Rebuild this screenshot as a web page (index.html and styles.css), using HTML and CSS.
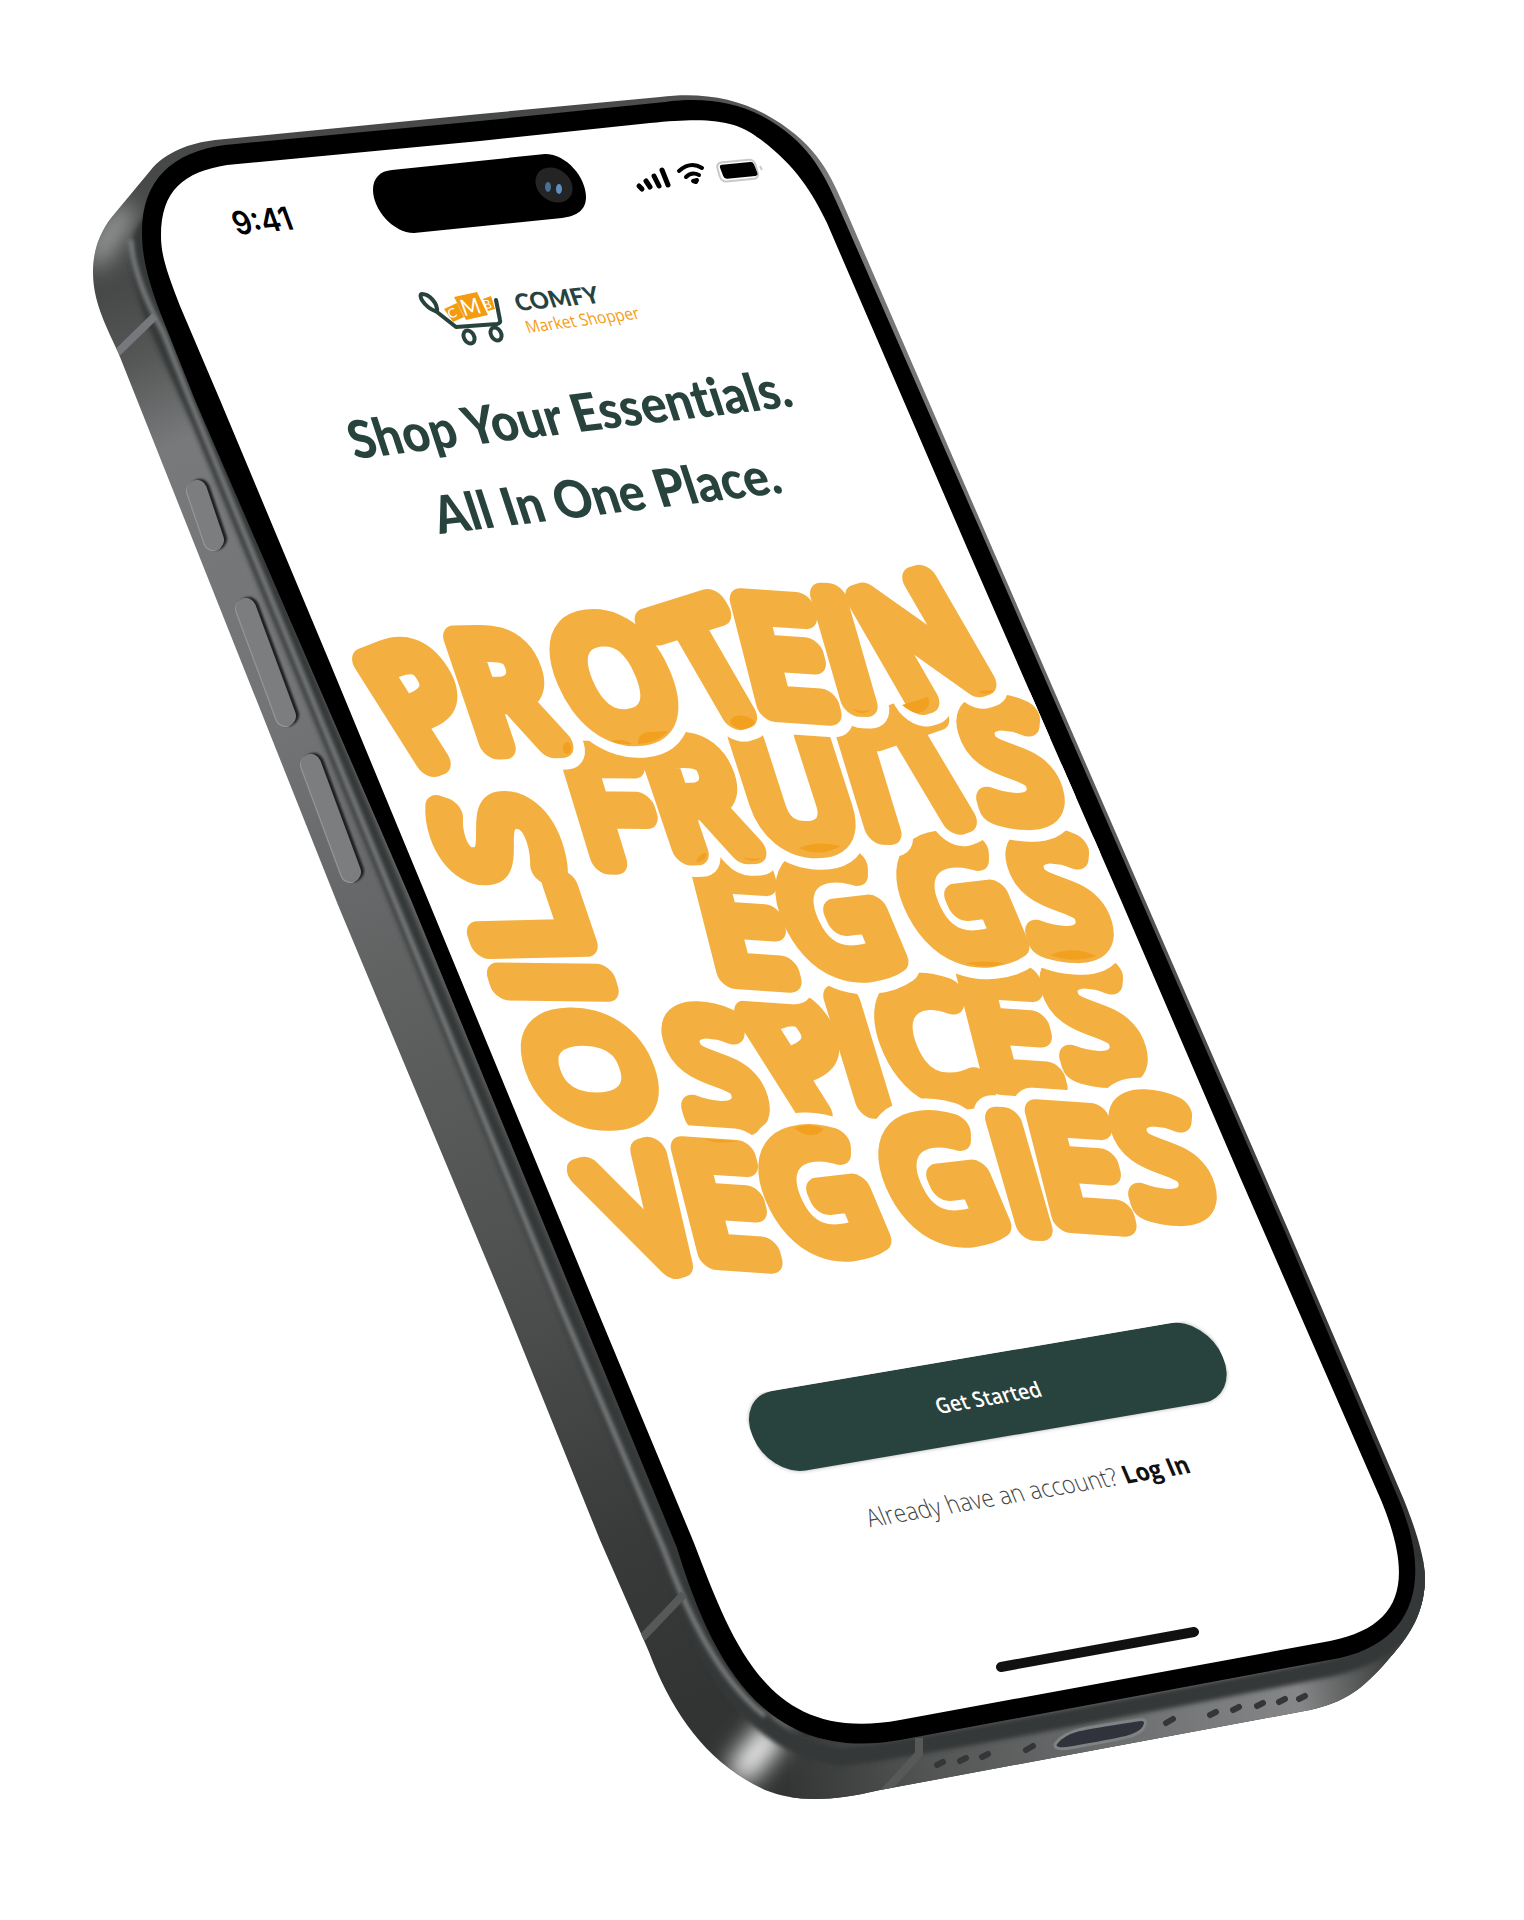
FILE: index.html
```html
<!DOCTYPE html>
<html lang="en">
<head>
<meta charset="utf-8">
<meta name="viewport" content="width=device-width, initial-scale=1">
<title>Comfy Market Shopper</title>
<link rel="stylesheet" href="styles.css">
</head>
<body>
<main class="stage">
<svg class="scene" viewBox="0 0 1524 1920">
  <defs>
    <linearGradient id="side" gradientUnits="userSpaceOnUse" x1="80" y1="300" x2="660" y2="1720">
      <stop offset="0" stop-color="#474948"/>
      <stop offset=".05" stop-color="#555756"/>
      <stop offset=".11" stop-color="#78797b"/>
      <stop offset=".3" stop-color="#737476"/>
      <stop offset=".5" stop-color="#5f6161"/>
      <stop offset=".72" stop-color="#4c4e4d"/>
      <stop offset=".88" stop-color="#393b3a"/>
      <stop offset="1" stop-color="#323433"/>
    </linearGradient>
    <linearGradient id="base" gradientUnits="userSpaceOnUse" x1="780" y1="1790" x2="1390" y2="1680">
      <stop offset="0" stop-color="#323433"/>
      <stop offset=".25" stop-color="#545656"/>
      <stop offset=".6" stop-color="#707273"/>
      <stop offset=".85" stop-color="#858788"/>
      <stop offset="1" stop-color="#3f4140"/>
    </linearGradient>
    <filter id="soft" filterUnits="userSpaceOnUse" x="0" y="0" width="1524" height="1920"><feGaussianBlur stdDeviation="2"/></filter>
    <filter id="glow" filterUnits="userSpaceOnUse" x="0" y="0" width="1524" height="1920"><feGaussianBlur stdDeviation="12"/></filter>
    <clipPath id="shell">
      <path d="M93 272C93 250 100 230 116 212L150 171C165 152 190 143 215 140L480 114L660 97C700 92 735 98 765 114C812 140 828 168 844 206L993 550L1145 900L1290 1234L1404 1500C1420 1540 1428 1570 1424 1592C1420 1622 1404 1642 1388 1660C1362 1690 1345 1702 1310 1710L880 1790C830 1802 795 1802 765 1790C705 1762 672 1712 649 1652L600 1540L503 1300L338 905L118 352C104 322 93 300 93 272Z"/>
    </clipPath>
    <clipPath id="glass">
      <path d="M161 236C161 190 184 172 227 165L480 141L650 123C715 116 738 122 760 139C795 165 812 192 827 223L968 550L1120 898L1240 1177L1381 1500C1414 1580 1404 1626 1330 1641L900 1720C770 1744 735 1650 694 1543L593 1300L428 900L330 663L220 400L180 306C166 270 161 254 161 236Z"/>
    </clipPath>
  </defs>

  <!-- Aluminium shell -->
  <g clip-path="url(#shell)">
    <path fill="url(#side)" d="M0 0H1524V1920H0Z"/>
    <path fill="url(#base)" d="M790 1740L1340 1640L1460 1540V1920H790Z"/>
    <path class="shine" filter="url(#glow)" d="M770 1736L744 1768"/>
    <path class="shine shine-top" filter="url(#glow)" d="M124 214L96 256"/>
    <path class="ridge-dark" filter="url(#soft)" d="M166 210C134 230 132 260 155 320L200 420L575 1330L665 1545C700 1650 745 1745 840 1757Q870 1758 1330 1668C1400 1652 1430 1610 1418 1560"/>
    <path class="ridge-light" filter="url(#soft)" d="M131 240C132 262 140 290 163 332L190 400L560 1305L664 1550C690 1620 720 1680 765 1716"/>
    <path class="seam" d="M155 316L116 354"/>
    <path class="seam seam-low" d="M684 1594L642 1638M919 1738V1754L884 1792"/>
  </g>

  <!-- Side keys -->
  <g class="keys">
    <path d="M197 490L214 540"/>
    <path d="M246 608L286 716"/>
    <path d="M311 764L351 872"/>
  </g>

  <!-- Ports and grilles -->
  <g class="grille">
    <path d="M937 1765l6 -3M960 1761l6 -3M982 1757l6 -3M1026 1750l7 -4M1166 1723l7 -4M1210 1715l6 -3M1233 1710l6 -3M1257 1706l6 -3M1279 1702l6 -3M1299 1699l6 -3"/>
  </g>
  <path class="port" d="M1056 1743C1066 1730 1082 1728 1137 1720C1146 1718 1148 1722 1142 1730C1134 1737 1126 1738 1070 1748C1060 1750 1052 1748 1056 1743Z"/>

  <!-- Bezel and glass -->
  <path fill="#000" d="M142 232C142 180 172 152 225 145L480 121L665 102C702 97 735 102 762 116C806 140 822 168 840 210L989 550L1141 900L1286 1234L1399 1500C1432 1580 1416 1640 1340 1658L900 1740C765 1764 712 1662 677 1548L575 1300L411 900L195 400L160 312C148 280 142 258 142 232Z"/>
  <path fill="#fff" clip-path="url(#glass)" d="M0 0H1524V1920H0Z"/>

  <!-- Status bar -->
  <path fill="#000" d="M392 170L545 154C567 154 586 178 586 197C586 210 577 216 562 218L414 233C393 233 373 209 373 190C373 178 380 171 392 170Z"/>
  <ellipse cx="554" cy="185" rx="20" ry="16" transform="rotate(38 554 185)" fill="#242424"/>
  <ellipse cx="548" cy="187" rx="3" ry="5" fill="#4b6f96"/>
  <ellipse cx="559" cy="189" rx="3" ry="5" fill="#5f8fc0"/>
  <text class="clock" transform="matrix(1 -.1 .4 1.09 237 235)">9:41</text>
  <g class="signal"><path d="M639 186L642 189M646 181L650 187M654 176L659 186M662 170L668 185"/></g>
  <g class="wifi">
    <path d="M679 171C687 164 694 163 702 168"/>
    <path d="M686 177C690 173 695 173 699 175"/>
    <path d="M693 181L697 180L696 182Z"/>
  </g>
  <rect class="battery-case" x="0" y="0" width="38" height="19" rx="5" transform="matrix(1 -.1 .28 1 716 163)"/>
  <rect fill="#000" x="0" y="0" width="34" height="14" rx="3" transform="matrix(1 -.1 .38 1 719 165)"/>
  <path class="battery-case" d="M760 166L762 170"/>

  <!-- Brand -->
  <g class="cart">
    <path d="M437 312C422 306 418 294 422 294C429 294 438 303 437 312L456 327L497 324Q501 323 500 320L496 300"/>
    <ellipse cx="469" cy="337" rx="5" ry="7" transform="rotate(-30 469 337)"/>
    <ellipse cx="496" cy="334" rx="5" ry="7" transform="rotate(-30 496 334)"/>
  </g>
  <g class="boxes">
    <path d="M444 309L457 303L464 317L453 322Z"/>
    <path d="M454 297L477 292L488 315L466 320Z"/>
    <path d="M483 299L491 296L495 309L488 311Z"/>
  </g>
  <g class="box-letters">
    <text class="tiny" transform="matrix(1 -.4 .45 1 450 319)">C</text>
    <text transform="matrix(1 -.16 .4 1.09 464 316)">M</text>
    <text class="tiny" transform="matrix(1 -.12 .4 1 485 309)">B</text>
  </g>
  <text class="brand" transform="matrix(1 -.1 .35 1 518 311)">COMFY</text>
  <text class="brand-sub" transform="matrix(1 -.13 .4 1.09 528 333)">Market Shopper</text>

  <!-- Headline -->
  <text class="headline" transform="matrix(1 -.12 .36 1.09 355 459)">Shop Your Essentials.</text>
  <text class="headline" transform="matrix(1 -.12 .36 1.09 440 534)">All In One Place.</text>

  <!-- Lettering: upper rows carve a white gap out of the rows below -->
  <g class="letters">
    <g id="oils">
      <text transform="translate(590 1069) matrix(1 -.12 .46 1.09 0 0) rotate(-85)" y="47">O</text>
      <text transform="translate(553 982) matrix(1 -.12 .46 1.09 0 0) rotate(-83)" y="47">I</text>
      <text transform="translate(526 920) matrix(1 -.12 .46 1.09 0 0) rotate(-85)" y="47">L</text>
      <text transform="translate(496 839) matrix(1 -.12 .46 1.09 0 0) rotate(-85)" y="47">S</text>
    </g>
    <g id="spices">
      <text transform="translate(715 1070) matrix(1 -.12 .46 1.09 0 0) rotate(8)" y="47">S</text>
      <text transform="translate(803 1056) matrix(1 -.12 .46 1.09 0 0) rotate(-12)" y="47">P</text>
      <text transform="translate(858 1052) matrix(1 -.12 .46 1.09 0 0) rotate(7)" y="47">I</text>
      <text transform="translate(928 1042) matrix(1 -.12 .46 1.09 0 0) rotate(4)" y="47">C</text>
      <text transform="translate(1009 1030) matrix(1 -.12 .46 1.09 0 0) rotate(10)" y="47">E</text>
      <text transform="translate(1093 1020) matrix(1 -.12 .46 1.09 0 0) rotate(8)" y="47">S</text>
    </g>
  </g>
  <g clip-path="url(#glass)"><use class="gap" href="#eggs"/></g>
  <g class="letters">
    <g id="eggs">
      <text transform="translate(743 924) matrix(1 -.12 .46 1.09 0 0) rotate(10)" y="47">E</text>
      <text transform="translate(836 915) matrix(1 -.12 .46 1.09 0 0) rotate(0)" y="47">G</text>
      <text transform="translate(957 900) matrix(1 -.12 .46 1.09 0 0) rotate(0)" y="47">G</text>
      <text transform="translate(1059 895) matrix(1 -.12 .46 1.09 0 0) rotate(8)" y="47">S</text>
    </g>
  </g>
  <g clip-path="url(#glass)"><use class="gap" href="#fruits"/></g>
  <g class="letters">
    <g id="fruits">
      <text transform="translate(610 808) matrix(1 -.12 .46 1.09 0 0) rotate(7)" y="47">F</text>
      <text transform="translate(696 798) matrix(1 -.12 .46 1.09 0 0) rotate(5)" y="47">R</text>
      <text transform="translate(796 790) matrix(1 -.12 .46 1.09 0 0) rotate(6)" y="47">U</text>
      <text transform="translate(867 778) matrix(1 -.12 .46 1.09 0 0) rotate(7)" y="47">I</text>
      <text transform="translate(929 769) matrix(1 -.12 .46 1.09 0 0) rotate(-10)" y="47">T</text>
      <text transform="translate(1010 762) matrix(1 -.12 .46 1.09 0 0) rotate(8)" y="47">S</text>
    </g>
  </g>
  <g clip-path="url(#glass)"><use class="gap" href="#protein"/></g>
  <g class="letters">
    <g id="protein">
      <text transform="translate(421 704) matrix(1 -.12 .46 1.09 0 0) rotate(-12)" y="47">P</text>
      <text transform="translate(503 692) matrix(1 -.12 .46 1.09 0 0) rotate(5)" y="47">R</text>
      <text transform="translate(614 678) matrix(1 -.12 .46 1.09 0 0) rotate(0)" y="47">O</text>
      <text transform="translate(710 664) matrix(1 -.12 .46 1.09 0 0) rotate(-9)" y="47">T</text>
      <text transform="translate(783 657) matrix(1 -.12 .46 1.09 0 0) rotate(10)" y="47">E</text>
      <text transform="translate(844 650) matrix(1 -.12 .46 1.09 0 0) rotate(8)" y="47">I</text>
      <text transform="translate(921 640) matrix(1 -.12 .46 1.09 0 0) rotate(-9)" y="47">N</text>
    </g>
  </g>
  <use class="gap" href="#veggies"/>
  <g class="letters">
    <g id="veggies">
      <text transform="translate(646 1213) matrix(1 -.12 .46 1.09 0 0) rotate(-9)" y="47">V</text>
      <text transform="translate(724 1205) matrix(1 -.12 .46 1.09 0 0) rotate(10)" y="47">E</text>
      <text transform="translate(819 1194) matrix(1 -.12 .46 1.09 0 0) rotate(0)" y="47">G</text>
      <text transform="translate(939 1180) matrix(1 -.12 .46 1.09 0 0) rotate(0)" y="47">G</text>
      <text transform="translate(1019 1174) matrix(1 -.12 .46 1.09 0 0) rotate(8)" y="47">I</text>
      <text transform="translate(1078 1168) matrix(1 -.12 .46 1.09 0 0) rotate(10)" y="47">E</text>
      <text transform="translate(1162 1158) matrix(1 -.12 .46 1.09 0 0) rotate(8)" y="47">S</text>
    </g>
  </g>
  <!-- Darker spots where two rows overlap -->
  <g class="overlap">
    <ellipse cx="567" cy="748" rx="4" ry="6"/>
    <path d="M638 744C638 736 642 732 650 732L668 731C660 740 650 743 638 744ZM611 741Q624 738 632 744Q620 745 611 741Z"/>
    <path d="M730 722C732 713 748 714 755 722C750 731 736 732 730 722Z"/>
    <path d="M852 709Q862 712 871 710Q862 717 852 709Z"/>
    <path d="M902 705L928 697C932 706 924 713 917 713Q910 712 902 705Z"/>
    <path d="M978 692Q986 689 994 691Q986 696 978 692Z"/>
    <path d="M696 862Q700 852 706 853Q708 861 696 862Z"/>
    <path d="M742 857Q752 860 761 858Q754 864 742 857Z"/>
    <path d="M799 848Q818 840 841 846Q820 858 799 848Z"/>
    <path d="M966 963Q984 960 1004 963Q988 970 966 963Z"/>
    <path d="M1050 955Q1074 945 1096 956Q1072 964 1050 955Z"/>
    <path d="M704 1139L738 1141Q718 1145 704 1139Z"/>
    <path d="M794 1128Q808 1122 824 1129Q812 1142 794 1128Z"/>
  </g>

  <!-- Actions -->
  <foreignObject width="470" height="150" transform="matrix(1 -.17 .46 1.09 736 1397)">
    <div class="actions">
      <button class="cta" type="button">Get Started</button>
      <p class="login">Already have an account? <a href="#login">Log In</a></p>
    </div>
  </foreignObject>
  <path class="home" d="M1001 1667L1194 1632"/>
</svg>
</main>
</body>
</html>
```
FILE: styles.css
```css
body {
  margin: 0;
  background: #fff;
  font-family: "Open Sans", sans-serif;
}

.stage { width: 100%; }

.scene {
  display: block;
  width: 100%;
  height: auto;
}

/* Phone body */
.ridge-dark { fill: none; stroke: #363837; stroke-width: 18; }
.ridge-light { fill: none; stroke: #8b8d8e; stroke-width: 4; }
.shine { fill: none; stroke: #fff; stroke-width: 28; stroke-linecap: round; }
.shine-top { stroke: #b5b8b7; stroke-width: 18; }
.seam { fill: none; stroke: #77787b; stroke-width: 8; }
.seam-low { stroke: #565958; }
.keys path {
  fill: none;
  stroke: #7b7d7f;
  stroke-width: 20;
  stroke-linecap: round;
  filter: drop-shadow(-1px 1px 0 #939597) drop-shadow(3px -1px 1px #1c1d1d);
}
.grille path { stroke: #343637; stroke-width: 6; stroke-linecap: round; }
.port { fill: #30323c; stroke: #808284; stroke-width: 3; }

/* Status bar */
.clock { font: 600 29px Inter, sans-serif; fill: #000; }
.signal path, .wifi path { fill: none; stroke: #000; stroke-width: 5; stroke-linecap: round; stroke-linejoin: round; }
.wifi path { stroke-width: 4; }
.battery-case { fill: none; stroke: #c9c9c9; stroke-width: 2; }

/* Brand */
.cart { fill: none; stroke: #28433d; stroke-width: 4; stroke-linejoin: round; stroke-linecap: round; }
.boxes { fill: #f39c12; }
.box-letters { font: 20px Lato, sans-serif; fill: #fff; }
.box-letters .tiny { font-size: 12px; }
.brand { font: 900 23px Lato, sans-serif; fill: #28433d; }
.brand-sub { font: 15px "Open Sans", sans-serif; fill: #f39c12; }

.headline {
  font: 900 47px Lato, sans-serif;
  font-variant-ligatures: none;
  fill: #28433d;
}

/* Rounded lettering */
.letters, .gap {
  font: 300 132px "Open Sans", sans-serif;
  text-anchor: middle;
  stroke-linejoin: round;
  stroke-linecap: round;
}
.letters { fill: #f4af41; stroke: #f4af41; stroke-width: 28; }
.gap { fill: #fff; stroke: #fff; stroke-width: 49; }
.overlap { fill: #f2a01f; }

/* Actions */
.actions {
  display: flex;
  flex-direction: column;
  gap: 34px;
}
.cta {
  height: 73px;
  border: 0;
  border-radius: 36px;
  background: #28433d;
  color: #fff;
  font: 600 19px "Open Sans", sans-serif;
  box-shadow: 0 0 4px rgba(0, 0, 0, .3);
}
.login {
  margin: 0;
  color: #444;
  font: 300 22px/30px "Open Sans", sans-serif;
  text-align: center;
}
.login a { color: #111; font-weight: 700; text-decoration: none; }
.home { stroke: #111; stroke-width: 10; stroke-linecap: round; }
```
